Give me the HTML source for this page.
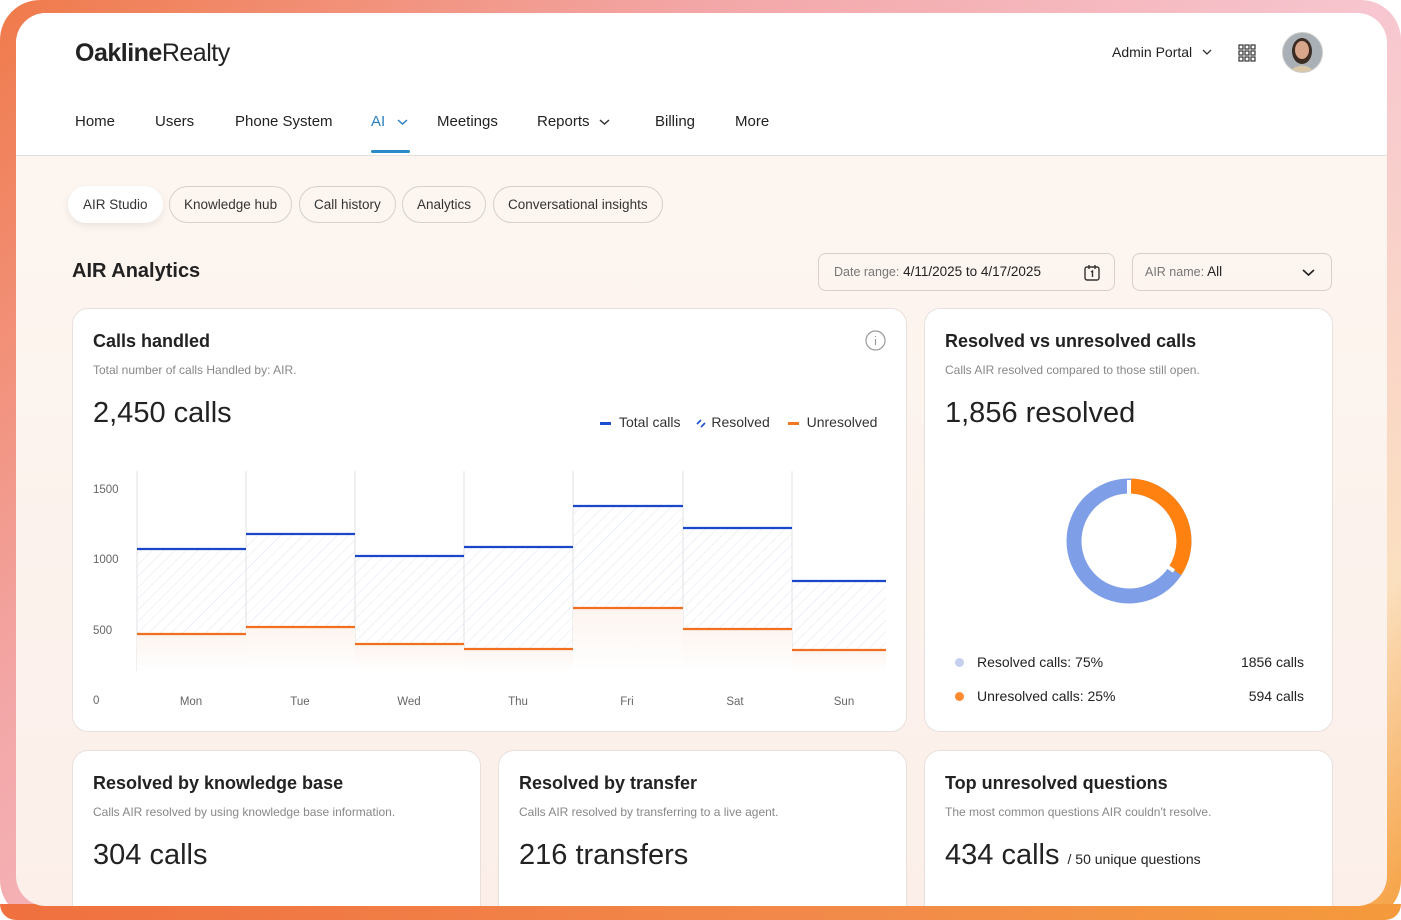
<!DOCTYPE html>
<html><head><meta charset="utf-8"><style>
*{box-sizing:border-box;margin:0;padding:0}
body{width:1401px;height:920px;overflow:hidden;font-family:"Liberation Sans",sans-serif;color:#222;background:#fff}
.frame{position:absolute;left:0;top:0;width:1401px;height:920px;border-radius:40px;background:linear-gradient(135deg,#f07a4a 0%,#f3a6a6 30%,#f7c6d0 60%,#fbe0c0 85%,#f6a040 100%)}
.frame:after{content:"";position:absolute;left:0;bottom:0;width:100%;height:16px;background:linear-gradient(90deg,#f07040,#f28a4a 60%,#f59a3c);border-radius:0 0 40px 40px}
.panel{position:absolute;left:16px;top:13px;width:1371px;height:893px;border-radius:30px;background:linear-gradient(180deg,#fdf7f1,#fcefea);overflow:hidden;z-index:2}
.head{position:absolute;left:0;top:0;width:100%;height:143px;background:#fff;border-bottom:1px solid #e6e0dc}
.logo{position:absolute;left:59px;top:26px;font-size:25px;letter-spacing:-0.5px}
.nav{position:absolute;top:100px;font-size:15px;color:#222}
.pill{position:absolute;top:173px;height:37px;border:1px solid #d9cfc8;border-radius:19px;font-size:13.5px;line-height:35px;padding:0 14px;color:#333}
.card{position:absolute;background:#fff;border:1px solid #e8e0dc;border-radius:16px}
.ct{position:absolute;left:20px;top:22px;font-size:18px;font-weight:bold;color:#222}
.cs{position:absolute;left:20px;top:54px;font-size:12px;color:#888}
.big{position:absolute;left:20px;top:88px;font-size:29px;color:#222}
</style></head><body>
<div class="frame"></div>
<div class="panel">
 <div class="head">
  <div class="logo"><b>Oakline</b>Realty</div>
  <div style="position:absolute;left:1096px;top:31px;font-size:14px">Admin Portal</div>
  <svg style="position:absolute;left:1186px;top:35px" width="10" height="8"><path d="M1 2l4 4 4-4" stroke="#333" fill="none" stroke-width="1.3"/></svg>
  <svg style="position:absolute;left:1222px;top:31px" width="18" height="18" fill="none" stroke="#333" stroke-width="1.2"><rect x="1" y="1" width="4" height="4"/><rect x="7" y="1" width="4" height="4"/><rect x="13" y="1" width="4" height="4"/><rect x="1" y="7" width="4" height="4"/><rect x="7" y="7" width="4" height="4"/><rect x="13" y="7" width="4" height="4"/><rect x="1" y="13" width="4" height="4"/><rect x="7" y="13" width="4" height="4"/><rect x="13" y="13" width="4" height="4"/></svg>
  <svg style="position:absolute;left:1266px;top:19px" width="41" height="41"><defs><clipPath id="c"><circle cx="20.5" cy="20.5" r="20"/></clipPath></defs><g clip-path="url(#c)"><rect width="41" height="41" fill="#a9b1b6"/><ellipse cx="20" cy="19" rx="10" ry="13" fill="#3b2c24"/><ellipse cx="20" cy="18" rx="7" ry="9" fill="#d8a68a"/><path d="M6 41 Q20 26 34 41Z" fill="#d9c7a8"/></g><circle cx="20.5" cy="20.5" r="20" fill="none" stroke="#ccc"/></svg>
  <div class="nav" style="left:59px">Home</div>
  <div class="nav" style="left:139px">Users</div>
  <div class="nav" style="left:219px">Phone System</div>
  <div class="nav" style="left:355px;color:#2a7fc0">AI</div>
  <svg style="position:absolute;left:381px;top:105px" width="11" height="8"><path d="M1 2l4.5 4 4.5-4" stroke="#2a7fc0" fill="none" stroke-width="1.5"/></svg>
  <div style="position:absolute;left:355px;top:137px;width:39px;height:3px;background:#2a8bc8;border-radius:2px"></div>
  <div class="nav" style="left:421px">Meetings</div>
  <div class="nav" style="left:521px">Reports</div>
  <svg style="position:absolute;left:583px;top:105px" width="11" height="8"><path d="M1 2l4.5 4 4.5-4" stroke="#333" fill="none" stroke-width="1.5"/></svg>
  <div class="nav" style="left:639px">Billing</div>
  <div class="nav" style="left:719px">More</div>
 </div>
 <div class="pill" style="left:52px;background:#fff;border-color:#fff;box-shadow:0 3px 8px rgba(0,0,0,.07)">AIR Studio</div>
 <div class="pill" style="left:153px">Knowledge hub</div>
 <div class="pill" style="left:283px">Call history</div>
 <div class="pill" style="left:386px">Analytics</div>
 <div class="pill" style="left:477px">Conversational insights</div>
 <div style="position:absolute;left:56px;top:247px;font-size:20px;font-weight:bold">AIR Analytics</div>
 <div style="position:absolute;left:802px;top:240px;width:297px;height:38px;border:1px solid #d9cfc8;border-radius:8px;font-size:13.5px;line-height:36px;padding-left:15px;color:#222"><span style="color:#777;font-size:12.5px">Date range:</span> 4/11/2025 to 4/17/2025
  <svg style="position:absolute;right:14px;top:10px" width="16" height="17" fill="none" stroke="#333" stroke-width="1.4"><rect x="1" y="3" width="14" height="13" rx="2"/><path d="M5 1v4M11 1v4M7 8l1.5-1v6"/></svg></div>
 <div style="position:absolute;left:1116px;top:240px;width:200px;height:38px;border:1px solid #d9cfc8;border-radius:8px;font-size:13.5px;line-height:36px;padding-left:12px"><span style="color:#777;font-size:12.5px">AIR name:</span> All
  <svg style="position:absolute;right:16px;top:14px" width="13" height="9"><path d="M1 2l5.5 5 5.5-5" stroke="#222" fill="none" stroke-width="1.6"/></svg></div>

 <div class="card" style="left:56px;top:295px;width:835px;height:424px">
  <div class="ct">Calls handled</div><div class="cs">Total number of calls Handled by: AIR.</div><div class="big">2,450 calls</div>
  <svg style="position:absolute;right:20px;top:21px" width="21" height="21" fill="none" stroke="#999" stroke-width="1.2"><circle cx="10.5" cy="10.5" r="9.5"/><path d="M10.5 9v6M10.5 6v1"/></svg>
  <div style="position:absolute;left:527px;top:105px;font-size:14px;color:#333;white-space:nowrap"><span style="display:inline-block;width:11px;height:3px;background:#1a4fd0;vertical-align:middle;margin-right:8px"></span>Total calls <svg style="margin:0 5px 0 12px;vertical-align:middle" width="10" height="9" stroke="#1a4fd0" stroke-width="1.6"><path d="M1 5l4-4M5 8l4-4"/></svg>Resolved <span style="display:inline-block;width:11px;height:3px;background:#f07820;vertical-align:middle;margin:0 8px 0 14px"></span>Unresolved</div>
  <svg style="position:absolute;left:0;top:0" width="835" height="424">
   <defs><pattern id="h" width="8" height="8" patternUnits="userSpaceOnUse" patternTransform="rotate(45)"><line x1="0" y1="0" x2="0" y2="8" stroke="#dfe5f3" stroke-width="1"/></pattern>
   <linearGradient id="o" x1="0" y1="0" x2="0" y2="1"><stop offset="0" stop-color="#fdf4ef"/><stop offset="1" stop-color="#fff"/></linearGradient></defs>
   <g transform="translate(-73,-308)">
   <g stroke="#e2e2e2"><line x1="137" y1="470" x2="137" y2="670"/><line x1="246" y1="470" x2="246" y2="670"/><line x1="355" y1="470" x2="355" y2="670"/><line x1="464" y1="470" x2="464" y2="670"/><line x1="573" y1="470" x2="573" y2="670"/><line x1="683" y1="470" x2="683" y2="670"/><line x1="792" y1="470" x2="792" y2="670"/></g>
   <g fill="url(#h)"><rect x="137" y="548" width="109" height="85"/><rect x="246" y="533" width="109" height="93"/><rect x="355" y="555" width="109" height="88"/><rect x="464" y="546" width="109" height="102"/><rect x="573" y="505" width="110" height="102"/><rect x="683" y="527" width="109" height="101"/><rect x="792" y="580" width="94" height="69"/></g>
   <g fill="url(#o)"><rect x="137" y="633" width="109" height="37"/><rect x="246" y="626" width="109" height="44"/><rect x="355" y="643" width="109" height="27"/><rect x="464" y="648" width="109" height="22"/><rect x="573" y="607" width="110" height="63"/><rect x="683" y="628" width="109" height="42"/><rect x="792" y="649" width="94" height="21"/></g>
   <g stroke="#1a47c8" stroke-width="2.2"><line x1="137" y1="548" x2="246" y2="548"/><line x1="246" y1="533" x2="355" y2="533"/><line x1="355" y1="555" x2="464" y2="555"/><line x1="464" y1="546" x2="573" y2="546"/><line x1="573" y1="505" x2="683" y2="505"/><line x1="683" y1="527" x2="792" y2="527"/><line x1="792" y1="580" x2="886" y2="580"/></g>
   <g stroke="#f07020" stroke-width="2.2"><line x1="137" y1="633" x2="246" y2="633"/><line x1="246" y1="626" x2="355" y2="626"/><line x1="355" y1="643" x2="464" y2="643"/><line x1="464" y1="648" x2="573" y2="648"/><line x1="573" y1="607" x2="683" y2="607"/><line x1="683" y1="628" x2="792" y2="628"/><line x1="792" y1="649" x2="886" y2="649"/></g>
   <g font-family="Liberation Sans" font-size="11.5" fill="#666"><text x="93" y="492">1500</text><text x="93" y="562">1000</text><text x="93" y="633">500</text><text x="93" y="703">0</text>
   <g text-anchor="middle"><text x="191" y="704">Mon</text><text x="300" y="704">Tue</text><text x="409" y="704">Wed</text><text x="518" y="704">Thu</text><text x="627" y="704">Fri</text><text x="735" y="704">Sat</text><text x="844" y="704">Sun</text></g></g>
   </g>
  </svg>
 </div>

 <div class="card" style="left:908px;top:295px;width:409px;height:424px">
  <div class="ct">Resolved vs unresolved calls</div><div class="cs">Calls AIR resolved compared to those still open.</div><div class="big">1,856 resolved</div>
  <svg style="position:absolute;left:140px;top:166px" width="130" height="130"><g fill="none" stroke-width="15"><circle cx="64" cy="66" r="55" stroke="#7f9ee8"/><path d="M66 11 A55 55 0 0 1 110 96" stroke="#ff8210"/></g><path d="M64 5v14M97 88l12 8" stroke="#fff" stroke-width="4"/></svg>
  <div style="position:absolute;left:30px;top:345px;font-size:14px"><span style="display:inline-block;width:9px;height:9px;border-radius:50%;background:#c5cff0;margin-right:13px"></span>Resolved calls: 75%</div>
  <div style="position:absolute;right:28px;top:345px;font-size:14px">1856 calls</div>
  <div style="position:absolute;left:30px;top:379px;font-size:14px"><span style="display:inline-block;width:9px;height:9px;border-radius:50%;background:#ff8a30;margin-right:13px"></span>Unresolved calls: 25%</div>
  <div style="position:absolute;right:28px;top:379px;font-size:14px">594 calls</div>
 </div>

 <div class="card" style="left:56px;top:737px;width:409px;height:200px"><div class="ct">Resolved by knowledge base</div><div class="cs">Calls AIR resolved by using knowledge base information.</div><div class="big">304 calls</div></div>
 <div class="card" style="left:482px;top:737px;width:409px;height:200px"><div class="ct">Resolved by transfer</div><div class="cs">Calls AIR resolved by transferring to a live agent.</div><div class="big">216 transfers</div></div>
 <div class="card" style="left:908px;top:737px;width:409px;height:200px"><div class="ct">Top unresolved questions</div><div class="cs">The most common questions AIR couldn't resolve.</div><div class="big">434 calls <span style="font-size:14px">/ 50 unique questions</span></div></div>
</div>
</body></html>
